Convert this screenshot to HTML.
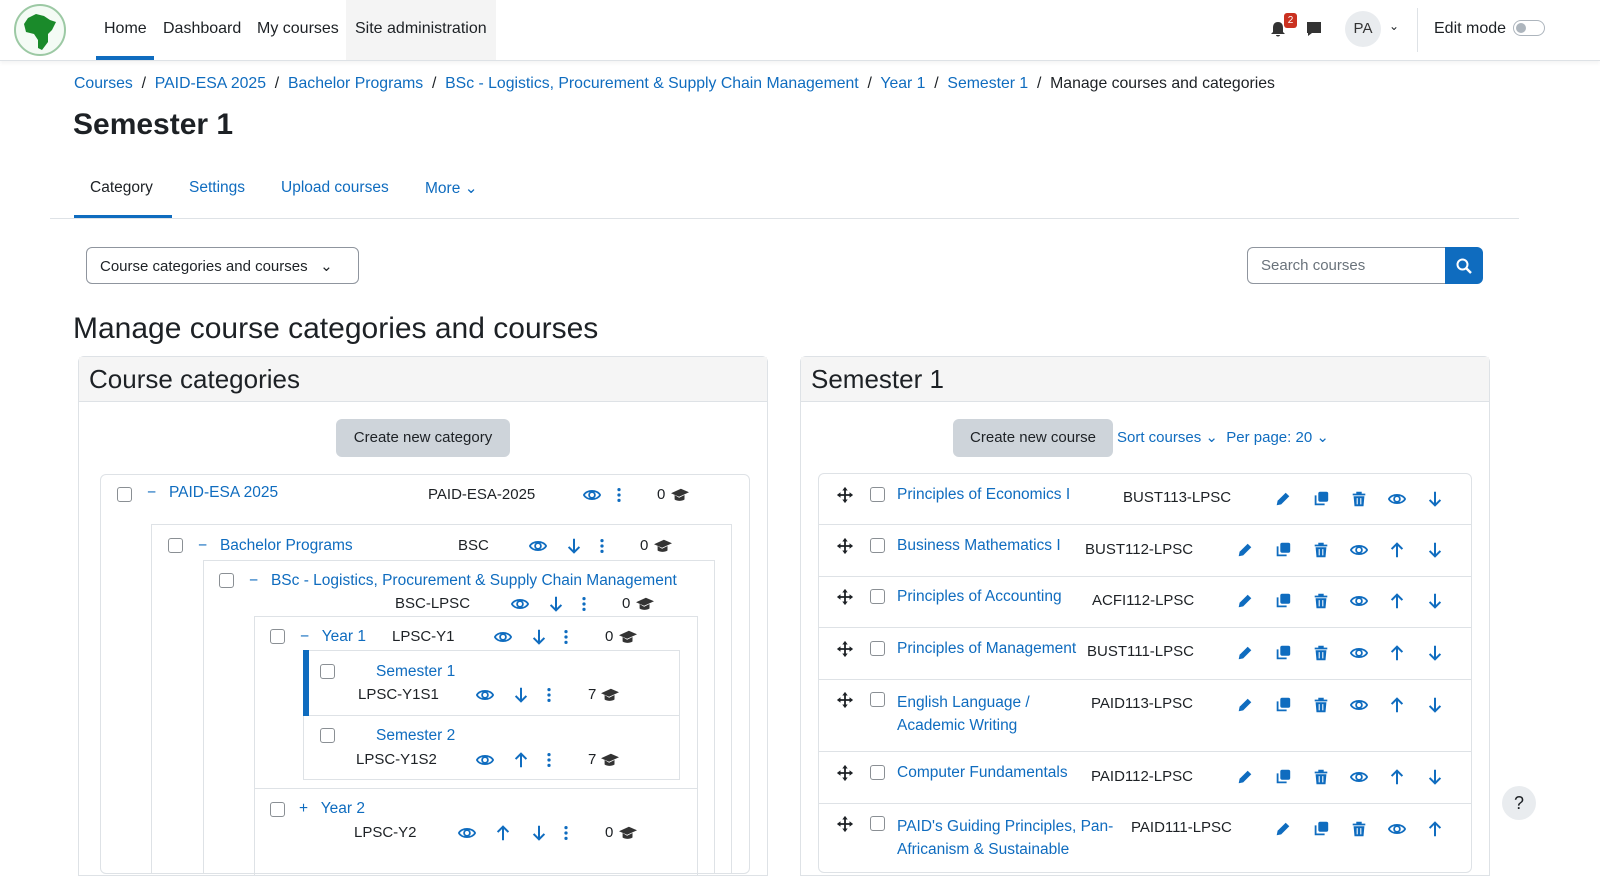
<!DOCTYPE html>
<html><head><meta charset="utf-8"><style>
*{box-sizing:border-box;margin:0;padding:0}
body{width:1600px;height:866px;overflow:hidden;background:#fff;font-family:"Liberation Sans",sans-serif;font-size:15px;color:#1d2125;position:relative}
.a{position:absolute;white-space:nowrap}
.l{color:#0f6cbf}
.cb{position:absolute;width:15px;height:15px;border:1.5px solid #8a8f94;border-radius:3px;background:#fff}
.ic{position:absolute;width:18px;height:18px}
.bx{position:absolute;border:1px solid #dee2e6}
.btn{position:absolute;background:#ced4da;border-radius:6px;text-align:center;font-size:15px;color:#1d2125}
</style></head><body>
<svg width="0" height="0" style="position:absolute">
<defs>
<symbol id="eye" viewBox="0 0 20 20"><path d="M1 10C4 4 16 4 19 10C16 16 4 16 1 10Z" fill="none" stroke="#0f6cbf" stroke-width="2"/><circle cx="10" cy="10" r="3.2" fill="none" stroke="#0f6cbf" stroke-width="2"/></symbol>
<symbol id="dn" viewBox="0 0 20 20"><path d="M10 2V17M4 11L10 17L16 11" fill="none" stroke="#0f6cbf" stroke-width="2.2"/></symbol>
<symbol id="up" viewBox="0 0 20 20"><path d="M10 18V3M4 9L10 3L16 9" fill="none" stroke="#0f6cbf" stroke-width="2.2"/></symbol>
<symbol id="dots" viewBox="0 0 20 20"><circle cx="10" cy="4" r="1.8" fill="#0f6cbf"/><circle cx="10" cy="10" r="1.8" fill="#0f6cbf"/><circle cx="10" cy="16" r="1.8" fill="#0f6cbf"/></symbol>
<symbol id="cap" viewBox="0 0 20 20"><path d="M0 8L11 3L20 7L9 12Z M4 10V15C7 17 12 17 15 15V10L9 13Z" fill="#333"/></symbol>
<symbol id="pen" viewBox="0 0 20 20"><path d="M3 17L4 12L13 3L17 7L8 16Z" fill="#0f6cbf"/></symbol>
<symbol id="cp" viewBox="0 0 20 20"><rect x="7" y="2" width="11" height="11" rx="2" fill="#0f6cbf"/><path d="M5 6H3V17H14V15H5Z" fill="#0f6cbf"/></symbol>
<symbol id="tr" viewBox="0 0 20 20"><path d="M3 4H17V6H3Z M7 2H13V4H7Z M4 7H16L15 18H5Z" fill="#0f6cbf"/><path d="M8 9V16M12 9V16" stroke="#fff" stroke-width="1.2"/></symbol>
<symbol id="mv" viewBox="0 0 20 20"><path d="M10 1L13 5H11V9H15V7L19 10L15 13V11H11V15H13L10 19L7 15H9V11H5V13L1 10L5 7V9H9V5H7Z" fill="#1d2125"/></symbol>
</defs></svg>

<div class="a" style="left:0;top:0;width:1600px;height:61px;border-bottom:1px solid #dee2e6;box-shadow:0 2px 4px rgba(0,0,0,.05)"></div>
<div class="a" style="left:14px;top:4px;width:52px;height:52px;border-radius:50%;border:2px solid #9cc9a4;background:#f4fbf5"></div>
<svg class="a" style="left:22px;top:10px" width="36" height="42" viewBox="0 0 36 42"><path d="M6 8L14 4L22 6L28 10L34 12L30 20L26 24L26 32L20 40L16 38L16 30L12 24L4 22L2 14Z" fill="#1a8a2a"/></svg>
<div class="a" style="left:346px;top:0;width:150px;height:60px;background:#f4f4f4"></div>
<div class="a" style="left:104px;top:20px;font-size:16px">Home</div>
<div class="a" style="left:96px;top:56px;width:58px;height:4px;background:#0f6cbf"></div>
<div class="a" style="left:163px;top:20px;font-size:16px">Dashboard</div>
<div class="a" style="left:257px;top:20px;font-size:16px">My courses</div>
<div class="a" style="left:355px;top:20px;font-size:16px">Site administration</div>
<svg class="a" style="left:1269px;top:20px" width="18" height="18" viewBox="0 0 18 18"><path d="M9 2C5 2 4 5 4 8V12L2 14H16L14 12V8C14 5 13 2 9 2Z M7 15H11C11 17 7 17 7 15Z" fill="#333"/></svg>
<div class="a" style="left:1284px;top:13px;width:13px;height:15px;background:#ca3120;border-radius:3px;color:#fff;font-size:10px;text-align:center;line-height:15px">2</div>
<svg class="a" style="left:1305px;top:20px" width="18" height="18" viewBox="0 0 18 18"><path d="M2 2H16V13H7L3 16V13H2Z" fill="#333"/></svg>
<div class="a" style="left:1345px;top:11px;width:36px;height:36px;border-radius:50%;background:#e9ecef;text-align:center;line-height:36px;font-size:15px;color:#333">PA</div>
<div class="a" style="left:1389px;top:19px;font-size:12px">⌄</div>
<div class="a" style="left:1417px;top:8px;width:1px;height:44px;background:#dee2e6"></div>
<div class="a" style="left:1434px;top:20px;font-size:16px">Edit mode</div>
<div class="a" style="left:1513px;top:20px;width:32px;height:16px;border:1.5px solid #adb5bd;border-radius:8px"></div>
<div class="a" style="left:1516px;top:23px;width:10px;height:10px;border-radius:50%;background:#adb5bd"></div>

<div class="a" style="left:74px;top:75px;font-size:15.8px"><span class="l">Courses</span> &nbsp;/&nbsp; <span class="l">PAID-ESA 2025</span> &nbsp;/&nbsp; <span class="l">Bachelor Programs</span> &nbsp;/&nbsp; <span class="l">BSc - Logistics, Procurement &amp; Supply Chain Management</span> &nbsp;/&nbsp; <span class="l">Year 1</span> &nbsp;/&nbsp; <span class="l">Semester 1</span> &nbsp;/&nbsp; Manage courses and categories</div>
<div class="a" style="left:73px;top:108px;font-size:30px;font-weight:bold">Semester 1</div>

<div class="a" style="left:90px;top:179px;font-size:15.5px">Category</div>
<div class="a" style="left:74px;top:215px;width:98px;height:4px;background:#0f6cbf"></div>
<div class="a l" style="left:189px;top:179px;font-size:15.5px">Settings</div>
<div class="a l" style="left:281px;top:179px;font-size:15.5px">Upload courses</div>
<div class="a l" style="left:425px;top:179px;font-size:15.5px">More ⌄</div>
<div class="a" style="left:50px;top:218px;width:1469px;height:1px;background:#dee2e6"></div>

<div class="a" style="left:86px;top:247px;width:273px;height:37px;border:1px solid #8f959e;border-radius:6px;padding:9px 13px;font-size:15px">Course categories and courses &nbsp;&nbsp;⌄</div>
<div class="a" style="left:1247px;top:247px;width:200px;height:37px;border:1px solid #8f959e;border-radius:6px 0 0 6px;padding:9px 13px;color:#6a737b">Search courses</div>
<div class="a" style="left:1445px;top:247px;width:38px;height:37px;background:#0f6cbf;border-radius:0 6px 6px 0"></div>
<svg class="a" style="left:1455px;top:257px" width="18" height="18" viewBox="0 0 18 18"><circle cx="7.5" cy="7.5" r="5" fill="none" stroke="#fff" stroke-width="2"/><path d="M11 11L16 16" stroke="#fff" stroke-width="2.4"/></svg>

<div class="a" style="left:73px;top:312px;font-size:30px">Manage course categories and courses</div>

<div class="bx" style="left:78px;top:356px;width:690px;height:520px;border-radius:6px 6px 0 0"></div>
<div class="a" style="left:79px;top:357px;width:688px;height:45px;background:#f5f5f5;border-bottom:1px solid #dee2e6"></div>
<div class="a" style="left:89px;top:364px;font-size:26px">Course categories</div>
<div class="btn" style="left:336px;top:419px;width:174px;height:38px;line-height:38px">Create new category</div>
<div class="bx" style="left:100px;top:474px;width:650px;height:400px;border-radius:6px"></div>
<div class="bx" style="left:151px;top:524px;width:581px;height:350px"></div>
<div class="bx" style="left:203px;top:560px;width:512px;height:314px"></div>
<div class="bx" style="left:254px;top:616px;width:444px;height:260px"></div>
<div class="a" style="left:254px;top:788px;width:444px;height:1px;background:#dee2e6"></div>
<div class="bx" style="left:303px;top:650px;width:377px;height:130px"></div>
<div class="a" style="left:303px;top:715px;width:377px;height:1px;background:#dee2e6"></div>
<div class="a" style="left:303px;top:650px;width:6px;height:66px;background:#0f6cbf"></div>

<div class="cb" style="left:117px;top:487px"></div><div class="a l" style="left:147px;top:484px;font-size:15.5px">−&nbsp;&nbsp; PAID-ESA 2025</div>
<div class="a" style="left:428px;top:486px">PAID-ESA-2025</div>
<svg class="ic" style="left:583px;top:486px"><use href="#eye"/></svg><svg class="ic" style="left:610px;top:486px"><use href="#dots"/></svg>
<div class="a" style="left:657px;top:486px">0</div><svg class="ic" style="left:671px;top:486px"><use href="#cap"/></svg>

<div class="cb" style="left:168px;top:538px"></div><div class="a l" style="left:198px;top:537px;font-size:15.5px">−&nbsp;&nbsp; Bachelor Programs</div>
<div class="a" style="left:458px;top:537px">BSC</div>
<svg class="ic" style="left:529px;top:537px"><use href="#eye"/></svg><svg class="ic" style="left:565px;top:537px"><use href="#dn"/></svg><svg class="ic" style="left:593px;top:537px"><use href="#dots"/></svg>
<div class="a" style="left:640px;top:537px">0</div><svg class="ic" style="left:654px;top:537px"><use href="#cap"/></svg>

<div class="cb" style="left:219px;top:573px"></div><div class="a l" style="left:249px;top:572px;font-size:15.5px">−&nbsp;&nbsp; BSc - Logistics, Procurement &amp; Supply Chain Management</div>
<div class="a" style="left:395px;top:595px">BSC-LPSC</div>
<svg class="ic" style="left:511px;top:595px"><use href="#eye"/></svg><svg class="ic" style="left:547px;top:595px"><use href="#dn"/></svg><svg class="ic" style="left:575px;top:595px"><use href="#dots"/></svg>
<div class="a" style="left:622px;top:595px">0</div><svg class="ic" style="left:636px;top:595px"><use href="#cap"/></svg>

<div class="cb" style="left:270px;top:629px"></div><div class="a l" style="left:300px;top:628px;font-size:15.5px">−&nbsp;&nbsp; Year 1</div>
<div class="a" style="left:392px;top:628px">LPSC-Y1</div>
<svg class="ic" style="left:494px;top:628px"><use href="#eye"/></svg><svg class="ic" style="left:530px;top:628px"><use href="#dn"/></svg><svg class="ic" style="left:557px;top:628px"><use href="#dots"/></svg>
<div class="a" style="left:605px;top:628px">0</div><svg class="ic" style="left:619px;top:628px"><use href="#cap"/></svg>

<div class="cb" style="left:320px;top:664px"></div><div class="a l" style="left:376px;top:663px;font-size:15.5px">Semester 1</div>
<div class="a" style="left:358px;top:686px">LPSC-Y1S1</div>
<svg class="ic" style="left:476px;top:686px"><use href="#eye"/></svg><svg class="ic" style="left:512px;top:686px"><use href="#dn"/></svg><svg class="ic" style="left:540px;top:686px"><use href="#dots"/></svg>
<div class="a" style="left:588px;top:686px">7</div><svg class="ic" style="left:601px;top:686px"><use href="#cap"/></svg>

<div class="cb" style="left:320px;top:728px"></div><div class="a l" style="left:376px;top:727px;font-size:15.5px">Semester 2</div>
<div class="a" style="left:356px;top:751px">LPSC-Y1S2</div>
<svg class="ic" style="left:476px;top:751px"><use href="#eye"/></svg><svg class="ic" style="left:512px;top:751px"><use href="#up"/></svg><svg class="ic" style="left:540px;top:751px"><use href="#dots"/></svg>
<div class="a" style="left:588px;top:751px">7</div><svg class="ic" style="left:601px;top:751px"><use href="#cap"/></svg>

<div class="cb" style="left:270px;top:802px"></div><div class="a l" style="left:299px;top:800px;font-size:15.5px">+&nbsp;&nbsp; Year 2</div>
<div class="a" style="left:354px;top:824px">LPSC-Y2</div>
<svg class="ic" style="left:458px;top:824px"><use href="#eye"/></svg><svg class="ic" style="left:494px;top:824px"><use href="#up"/></svg><svg class="ic" style="left:530px;top:824px"><use href="#dn"/></svg><svg class="ic" style="left:557px;top:824px"><use href="#dots"/></svg>
<div class="a" style="left:605px;top:824px">0</div><svg class="ic" style="left:619px;top:824px"><use href="#cap"/></svg>

<div class="bx" style="left:800px;top:356px;width:690px;height:520px;border-radius:6px 6px 0 0"></div>
<div class="a" style="left:801px;top:357px;width:688px;height:45px;background:#f5f5f5;border-bottom:1px solid #dee2e6"></div>
<div class="a" style="left:811px;top:364px;font-size:26px">Semester 1</div>
<div class="btn" style="left:953px;top:419px;width:160px;height:38px;line-height:38px">Create new course</div>
<div class="a l" style="left:1117px;top:428px">Sort courses ⌄ &nbsp;Per page: 20 ⌄</div>
<div class="bx" style="left:818px;top:473px;width:654px;height:400px;border-radius:6px"></div>
<div class="a" style="left:819px;top:524px;width:652px;height:1px;background:#dee2e6"></div>
<div class="a" style="left:819px;top:576px;width:652px;height:1px;background:#dee2e6"></div>
<div class="a" style="left:819px;top:627px;width:652px;height:1px;background:#dee2e6"></div>
<div class="a" style="left:819px;top:679px;width:652px;height:1px;background:#dee2e6"></div>
<div class="a" style="left:819px;top:751px;width:652px;height:1px;background:#dee2e6"></div>
<div class="a" style="left:819px;top:803px;width:652px;height:1px;background:#dee2e6"></div>

<svg class="ic" style="left:836px;top:486px"><use href="#mv"/></svg><div class="cb" style="left:870px;top:487px"></div>
<div class="a l" style="left:897px;top:486px;font-size:15.5px">Principles of Economics I</div><div class="a" style="left:1123px;top:489px">BUST113-LPSC</div>
<svg class="ic" style="left:1274px;top:490px"><use href="#pen"/></svg><svg class="ic" style="left:1312px;top:490px"><use href="#cp"/></svg><svg class="ic" style="left:1350px;top:490px"><use href="#tr"/></svg><svg class="ic" style="left:1388px;top:490px"><use href="#eye"/></svg><svg class="ic" style="left:1426px;top:490px"><use href="#dn"/></svg>

<svg class="ic" style="left:836px;top:537px"><use href="#mv"/></svg><div class="cb" style="left:870px;top:538px"></div>
<div class="a l" style="left:897px;top:537px;font-size:15.5px">Business Mathematics I</div><div class="a" style="left:1085px;top:541px">BUST112-LPSC</div>
<svg class="ic" style="left:1236px;top:541px"><use href="#pen"/></svg><svg class="ic" style="left:1274px;top:541px"><use href="#cp"/></svg><svg class="ic" style="left:1312px;top:541px"><use href="#tr"/></svg><svg class="ic" style="left:1350px;top:541px"><use href="#eye"/></svg><svg class="ic" style="left:1388px;top:541px"><use href="#up"/></svg><svg class="ic" style="left:1426px;top:541px"><use href="#dn"/></svg>

<svg class="ic" style="left:836px;top:588px"><use href="#mv"/></svg><div class="cb" style="left:870px;top:589px"></div>
<div class="a l" style="left:897px;top:588px;font-size:15.5px">Principles of Accounting</div><div class="a" style="left:1092px;top:592px">ACFI112-LPSC</div>
<svg class="ic" style="left:1236px;top:592px"><use href="#pen"/></svg><svg class="ic" style="left:1274px;top:592px"><use href="#cp"/></svg><svg class="ic" style="left:1312px;top:592px"><use href="#tr"/></svg><svg class="ic" style="left:1350px;top:592px"><use href="#eye"/></svg><svg class="ic" style="left:1388px;top:592px"><use href="#up"/></svg><svg class="ic" style="left:1426px;top:592px"><use href="#dn"/></svg>

<svg class="ic" style="left:836px;top:640px"><use href="#mv"/></svg><div class="cb" style="left:870px;top:641px"></div>
<div class="a l" style="left:897px;top:640px;font-size:15.5px">Principles of Management</div><div class="a" style="left:1087px;top:643px">BUST111-LPSC</div>
<svg class="ic" style="left:1236px;top:644px"><use href="#pen"/></svg><svg class="ic" style="left:1274px;top:644px"><use href="#cp"/></svg><svg class="ic" style="left:1312px;top:644px"><use href="#tr"/></svg><svg class="ic" style="left:1350px;top:644px"><use href="#eye"/></svg><svg class="ic" style="left:1388px;top:644px"><use href="#up"/></svg><svg class="ic" style="left:1426px;top:644px"><use href="#dn"/></svg>

<svg class="ic" style="left:836px;top:691px"><use href="#mv"/></svg><div class="cb" style="left:870px;top:692px"></div>
<div class="a l" style="left:897px;top:691px;font-size:15.5px;line-height:23px">English Language /<br>Academic Writing</div><div class="a" style="left:1091px;top:695px">PAID113-LPSC</div>
<svg class="ic" style="left:1236px;top:696px"><use href="#pen"/></svg><svg class="ic" style="left:1274px;top:696px"><use href="#cp"/></svg><svg class="ic" style="left:1312px;top:696px"><use href="#tr"/></svg><svg class="ic" style="left:1350px;top:696px"><use href="#eye"/></svg><svg class="ic" style="left:1388px;top:696px"><use href="#up"/></svg><svg class="ic" style="left:1426px;top:696px"><use href="#dn"/></svg>

<svg class="ic" style="left:836px;top:764px"><use href="#mv"/></svg><div class="cb" style="left:870px;top:765px"></div>
<div class="a l" style="left:897px;top:764px;font-size:15.5px">Computer Fundamentals</div><div class="a" style="left:1091px;top:768px">PAID112-LPSC</div>
<svg class="ic" style="left:1236px;top:768px"><use href="#pen"/></svg><svg class="ic" style="left:1274px;top:768px"><use href="#cp"/></svg><svg class="ic" style="left:1312px;top:768px"><use href="#tr"/></svg><svg class="ic" style="left:1350px;top:768px"><use href="#eye"/></svg><svg class="ic" style="left:1388px;top:768px"><use href="#up"/></svg><svg class="ic" style="left:1426px;top:768px"><use href="#dn"/></svg>

<svg class="ic" style="left:836px;top:815px"><use href="#mv"/></svg><div class="cb" style="left:870px;top:816px"></div>
<div class="a l" style="left:897px;top:815px;font-size:15.5px;line-height:23px">PAID's Guiding Principles, Pan-<br>Africanism &amp; Sustainable</div><div class="a" style="left:1131px;top:819px">PAID111-LPSC</div>
<svg class="ic" style="left:1274px;top:820px"><use href="#pen"/></svg><svg class="ic" style="left:1312px;top:820px"><use href="#cp"/></svg><svg class="ic" style="left:1350px;top:820px"><use href="#tr"/></svg><svg class="ic" style="left:1388px;top:820px"><use href="#eye"/></svg><svg class="ic" style="left:1426px;top:820px"><use href="#up"/></svg>

<div class="a" style="left:1502px;top:786px;width:34px;height:34px;border-radius:50%;background:#e9ecef;text-align:center;line-height:34px;font-size:18px">?</div>
</body></html>
